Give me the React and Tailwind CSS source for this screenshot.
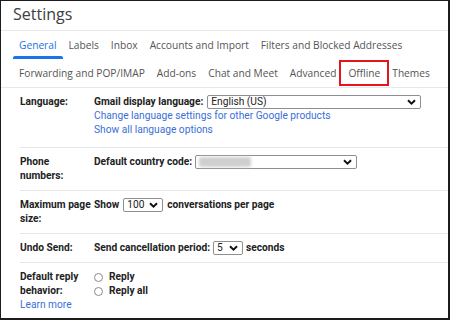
import React from "react";

const rowTabs = [
  ["General", "Labels", "Inbox", "Accounts and Import", "Filters and Blocked Addresses"],
  ["Forwarding and POP/IMAP", "Add-ons", "Chat and Meet", "Advanced", "Offline", "Themes"],
];

function Chevron() {
  return (
    <svg width="9" height="6" viewBox="0 0 9 6" className="shrink-0">
      <polyline points="1,1.2 4.5,4.6 8,1.2" fill="none" stroke="#111" strokeWidth="2" />
    </svg>
  );
}

function Select({ width, children }) {
  return (
    <div
      className={`${width} h-[14px] border border-[#8f8f8f] rounded-[2px] flex items-center justify-between pl-[3px] pr-[4px] font-normal text-[#222] bg-white`}
    >
      <div className="flex items-center h-full">{children}</div>
      <Chevron />
    </div>
  );
}

function Row({ label, last, pb = "pb-[7px]", children }) {
  return (
    <div className={`flex pt-[7px] ${pb} leading-[14px] ${last ? "" : "border-b border-[#e6e6e6]"}`}>
      <div className="w-[74px] shrink-0">{label}</div>
      <div className="flex-1">{children}</div>
    </div>
  );
}

function Radio({ label }) {
  return (
    <div className="flex items-center gap-[6px] h-[14px]">
      <span className="w-[9px] h-[9px] rounded-full border border-[#8a8a8a] bg-white" />
      <span>{label}</span>
    </div>
  );
}

export default function App() {
  return (
    <div className="w-[450px] h-[320px] bg-white border-t border-l border-r-2 border-b-2 border-[#1c1c1c] overflow-hidden">
      <div className="h-[29px] pl-[12px] pt-[2px] text-[16px] leading-[22px] text-[#3c4043] font-['Open_Sans',sans-serif]">
        Settings
      </div>

      <div className="border-t border-b border-[#e8e8e8] font-['Open_Sans',sans-serif] text-[10.2px] text-[#555]">
        {rowTabs.map((tabs, i) => (
          <div key={i} className={`flex pl-[12px] ${i === 0 ? "h-[29px]" : "h-[27px]"}`}>
            {tabs.map((t) => (
              <div key={t} className="relative flex items-center px-[6px] whitespace-nowrap">
                <span className={t === "General" ? "text-[#1a73e8]" : ""}>{t}</span>
                {t === "General" && (
                  <span className="absolute left-0 right-0 bottom-[1px] h-[3px] rounded-t-[2px] bg-[#1a73e8]" />
                )}
                {t === "Offline" && (
                  <span className="absolute left-[-3px] right-[-3px] top-[0px] bottom-[1px] border-2 border-[#e8141b]" />
                )}
              </div>
            ))}
          </div>
        ))}
      </div>

      <div className="ml-[19px] font-['Roboto',sans-serif] text-[10.2px] font-bold text-[#222]">
        <Row label="Language:" pb="pb-[10px]">
          <div className="flex items-center gap-[4px] h-[14px]">
            <span>Gmail display language:</span>
            <Select width="w-[214px]">English (US)</Select>
          </div>
          <div className="font-normal text-[#3a6fd8]">Change language settings for other Google products</div>
          <div className="font-normal text-[#3a6fd8]">Show all language options</div>
        </Row>

        <Row label={<>Phone<br />numbers:</>}>
          <div className="flex items-center gap-[3px] h-[14px]">
            <span>Default country code:</span>
            <Select width="w-[162px]">
              <span className="block w-[52px] h-[10px] rounded-[2px] bg-[#cfcfcf] blur-[1.5px]" />
            </Select>
          </div>
        </Row>

        <Row label={<>Maximum page<br />size:</>}>
          <div className="flex items-center gap-[4px] h-[14px]">
            <span>Show</span>
            <Select width="w-[40px]">100</Select>
            <span>conversations per page</span>
          </div>
        </Row>

        <Row label="Undo Send:">
          <div className="flex items-center gap-[3px] h-[14px]">
            <span>Send cancellation period:</span>
            <Select width="w-[30px]">5</Select>
            <span>seconds</span>
          </div>
        </Row>

        <Row
          last
          label={
            <>
              Default reply
              <br />
              behavior:
              <div className="font-normal text-[#3a6fd8]">Learn more</div>
            </>
          }
        >
          <Radio label="Reply" />
          <Radio label="Reply all" />
        </Row>
      </div>
    </div>
  );
}
